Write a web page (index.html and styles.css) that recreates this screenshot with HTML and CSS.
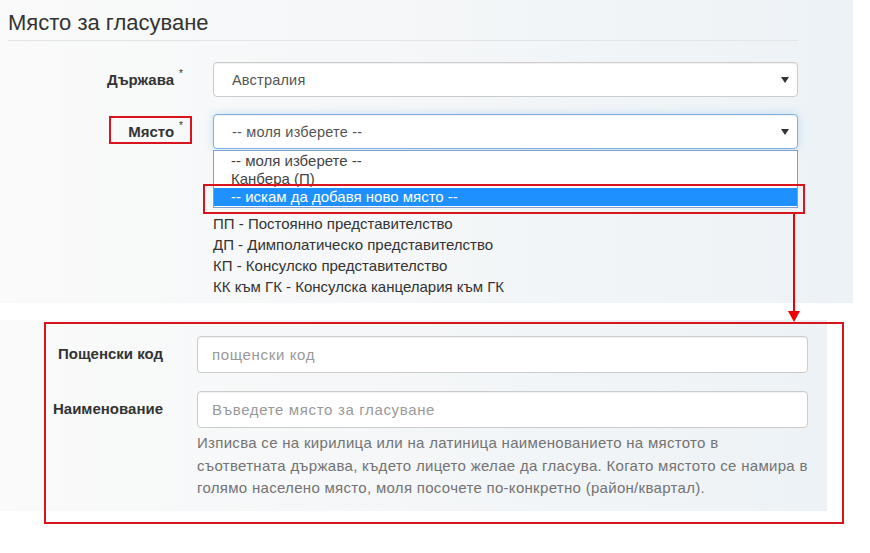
FILE: index.html
```html
<!DOCTYPE html>
<html lang="bg">
<head>
    <meta charset="UTF-8">
    <title>Място за гласуване</title>
    <link rel="stylesheet" href="styles.css">
</head>
<body>
    <div class="page">
        <section class="panel panel-top">
            <h4 class="panel-title">Място за гласуване</h4>
            <div class="divider"></div>

            <div class="form-row">
                <label class="lbl">Държава<sup>*</sup></label>
                <div class="ctrl">
                    <div class="select">
                        <span>Австралия</span>
                        <svg class="caret" width="8" height="6" viewBox="0 0 8 6"><path d="M0 0h8L4 6z" fill="#333"/></svg>
                    </div>
                </div>
            </div>

            <div class="form-row">
                <label class="lbl"><span class="marked">Място<sup>*</sup></span></label>
                <div class="ctrl">
                    <div class="select is-focus">
                        <span>-- моля изберете --</span>
                        <svg class="caret" width="8" height="6" viewBox="0 0 8 6"><path d="M0 0h8L4 6z" fill="#333"/></svg>
                    </div>
                    <ul class="options">
                        <li>-- моля изберете --</li>
                        <li>Канбера (П)</li>
                        <li class="active">-- искам да добавя ново място --</li>
                    </ul>
                </div>
            </div>

            <div class="abbr">
                <div>ПП - Постоянно представителство</div>
                <div>ДП - Димполатическо представителство</div>
                <div>КП - Консулско представителство</div>
                <div>КК към ГК - Консулска канцелария към ГК</div>
            </div>
        </section>

        <section class="panel panel-bottom">
            <div class="form-row">
                <label class="lbl">Пощенски код</label>
                <div class="ctrl">
                    <div class="input placeholder">пощенски код</div>
                </div>
            </div>
            <div class="form-row">
                <label class="lbl">Наименование</label>
                <div class="ctrl">
                    <div class="input placeholder">Въведете място за гласуване</div>
                    <p class="help">Изписва се на кирилица или на латиница наименованието на мястото в съответната държава, където лицето желае да гласува. Когато мястото се намира в голямо населено място, моля посочете по-конкретно (район/квартал).</p>
                </div>
            </div>
        </section>

        <!-- annotations -->
        <div class="mark-option"></div>
        <div class="arrow"></div>
        <div class="mark-section"></div>
    </div>
</body>
</html>
```

FILE: styles.css
```css
* {
    margin: 0;
    padding: 0;
    box-sizing: border-box;
}

body {
    background: #fff;
    font-family: "Liberation Sans", Arial, sans-serif;
    font-size: 15px;
    color: #333;
}

.page {
    position: relative;
    width: 870px;
    height: 553px;
}

.panel {
    background: linear-gradient(to right, #fafafa 0%, #f5f7f8 45%, #edf2f6 100%);
}

.panel-top {
    width: 853px;
    height: 303px;
    padding-top: 10px;
}

.panel-title {
    font-size: 22px;
    font-weight: normal;
    line-height: 26px;
    color: #333;
    padding-left: 8px;
}

.divider {
    margin: 4px 0 0 8px;
    width: 790px;
    border-top: 1px solid #e3e5e7;
}

.panel-top .form-row {
    display: flex;
    align-items: flex-start;
    margin-top: 21px;
}

.panel-top .form-row + .form-row {
    margin-top: 17px;
}

.lbl {
    font-weight: bold;
    text-align: right;
    color: #333;
    line-height: 35px;
}

.panel-top .lbl {
    width: 183px;
}

.lbl sup {
    font-size: 10px;
    font-weight: normal;
    margin-left: 5px;
    vertical-align: 8px;
    line-height: 0;
}

.marked {
    position: relative;
}

.marked::before {
    content: "";
    position: absolute;
    left: -19px;
    right: -9px;
    top: -7px;
    bottom: -4px;
    border: 2px solid #d8141c;
}

.panel-top .ctrl {
    position: relative;
    width: 585px;
    margin-left: 30px;
}

.select {
    display: flex;
    align-items: center;
    justify-content: space-between;
    height: 35px;
    padding: 0 8px 0 18px;
    background: #fff;
    border: 1px solid #ccc;
    border-radius: 4px;
    color: #555;
    font-size: 14.5px;
    letter-spacing: 0.2px;
    box-shadow: inset 0 1px 1px rgba(0, 0, 0, 0.06);
}

.select.is-focus {
    border-color: #7fb0e0;
    box-shadow: inset 0 1px 1px rgba(0, 0, 0, 0.06), 0 0 8px rgba(102, 175, 233, 0.35);
}

.options {
    position: absolute;
    top: 36px;
    left: 0;
    width: 585px;
    list-style: none;
    background: #fff;
    border: 1px solid #7f9fcc;
    padding: 1px 0 1px;
    color: #444;
    z-index: 2;
}

.options li {
    height: 18px;
    line-height: 18px;
    padding-left: 17px;
}

.options li.active {
    background: #1e90ff;
    color: #fff;
}

.abbr {
    margin: 64px 0 0 213px;
    line-height: 21px;
    color: #333;
}

.panel-bottom {
    width: 827px;
    height: 191px;
    margin-top: 17px;
    padding-top: 16px;
}

.panel-bottom .form-row {
    display: flex;
    align-items: flex-start;
}

.panel-bottom .form-row + .form-row {
    margin-top: 18px;
}

.panel-bottom .lbl {
    width: 163px;
    line-height: 36px;
}

.panel-bottom .ctrl {
    width: 611px;
    margin-left: 34px;
}

.input {
    height: 37px;
    line-height: 35px;
    padding: 0 14px;
    background: #fff;
    border: 1px solid #ccc;
    border-radius: 4px;
    box-shadow: inset 0 1px 1px rgba(0, 0, 0, 0.06);
}

.placeholder {
    color: #999;
    letter-spacing: 0.65px;
}

.help {
    margin-top: 4px;
    line-height: 22.5px;
    letter-spacing: 0.3px;
    color: #737373;
}

.mark-option {
    position: absolute;
    left: 203px;
    top: 184px;
    width: 602px;
    height: 30px;
    border: 2px solid #d8141c;
    z-index: 3;
}

.arrow {
    position: absolute;
    left: 793px;
    top: 214px;
    width: 2px;
    height: 98px;
    background: #e00;
}

.arrow::after {
    content: "";
    position: absolute;
    left: -5px;
    top: 97px;
    border-left: 6px solid transparent;
    border-right: 6px solid transparent;
    border-top: 11px solid #e00;
}

.mark-section {
    position: absolute;
    left: 44px;
    top: 322px;
    width: 800px;
    height: 202px;
    border: 2px solid #d8141c;
}
```
